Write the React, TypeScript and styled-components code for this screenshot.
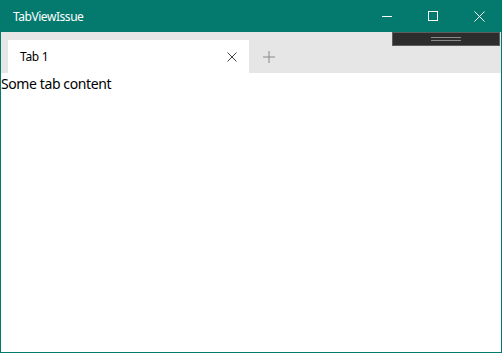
import styled, { createGlobalStyle } from "styled-components";

const accent = "#047a6f";

const GlobalStyle = createGlobalStyle`
  html, body {
    margin: 0;
    padding: 0;
    background: #ffffff;
  }
  body {
    font-family: "Segoe UI", "Noto Sans", sans-serif;
  }
`;

const Window = styled.div`
  position: relative;
  box-sizing: border-box;
  width: 502px;
  height: 353px;
  border: 1px solid ${accent};
  border-top: none;
  display: flex;
  flex-direction: column;
  background: #ffffff;
  overflow: hidden;
`;

const TitleBar = styled.div`
  height: 32px;
  margin: 0 -1px;
  background: ${accent};
  display: flex;
  align-items: center;
  flex-shrink: 0;
`;

const Title = styled.div`
  flex: 1;
  padding-left: 13px;
  color: #ffffff;
  font-size: 12px;
  letter-spacing: -0.45px;
`;

const CaptionButton = styled.div`
  width: 46px;
  height: 32px;
  display: flex;
  align-items: center;
  justify-content: center;
  color: #ffffff;
`;

const DebugBar = styled.div`
  position: absolute;
  top: 32px;
  left: 391px;
  width: 106px;
  height: 12px;
  background: #2d2d2d;
  border: 1px solid #5e5e5e;
  display: flex;
  align-items: center;
  justify-content: center;
`;

const Grip = styled.div`
  width: 30px;
  height: 2px;
  border-top: 1px solid #8a8a8a;
  border-bottom: 1px solid #8a8a8a;
`;

const TabStrip = styled.div`
  height: 41px;
  background: #e6e6e6;
  display: flex;
  align-items: flex-end;
  padding-left: 7px;
  flex-shrink: 0;
`;

const Tab = styled.div`
  width: 241px;
  height: 33px;
  box-sizing: border-box;
  background: #ffffff;
  display: flex;
  align-items: center;
  padding-left: 12px;
  font-size: 12px;
  letter-spacing: -0.3px;
  color: #000000;
`;

const TabLabel = styled.span`
  flex: 1;
`;

const IconButton = styled.div<{ $width: number }>`
  width: ${(p) => p.$width}px;
  height: 33px;
  display: flex;
  align-items: center;
  justify-content: center;
`;

const Content = styled.div`
  flex: 1;
  font-size: 14px;
  line-height: 19px;
  padding-top: 1px;
  letter-spacing: -0.4px;
  color: #000000;
`;

export default function App() {
  return (
    <>
      <GlobalStyle />
      <Window>
        <TitleBar>
          <Title>TabViewIssue</Title>
          <CaptionButton>
            <svg width="10" height="10" viewBox="0 0 10 10">
              <line x1="0" y1="5.5" x2="10" y2="5.5" stroke="#fff" strokeWidth="1" />
            </svg>
          </CaptionButton>
          <CaptionButton>
            <svg width="10" height="10" viewBox="0 0 10 10">
              <rect x="0.5" y="0.5" width="9" height="9" fill="none" stroke="#fff" strokeWidth="1" />
            </svg>
          </CaptionButton>
          <CaptionButton>
            <svg width="11" height="11" viewBox="0 0 11 11">
              <path d="M0.5 0.5 L10.5 10.5 M10.5 0.5 L0.5 10.5" stroke="#fff" strokeWidth="1" />
            </svg>
          </CaptionButton>
        </TitleBar>
        <TabStrip>
          <Tab>
            <TabLabel>Tab 1</TabLabel>
            <IconButton $width={34}>
              <svg width="10" height="10" viewBox="0 0 10 10">
                <path d="M0.5 0.5 L9.5 9.5 M9.5 0.5 L0.5 9.5" stroke="#444" strokeWidth="1" />
              </svg>
            </IconButton>
          </Tab>
          <IconButton $width={40}>
            <svg width="12" height="12" viewBox="0 0 12 12">
              <path d="M6 0 V12 M0 6 H12" stroke="#8a8a8a" strokeWidth="1" />
            </svg>
          </IconButton>
        </TabStrip>
        <Content>Some tab content</Content>
        <DebugBar>
          <Grip />
        </DebugBar>
      </Window>
    </>
  );
}
